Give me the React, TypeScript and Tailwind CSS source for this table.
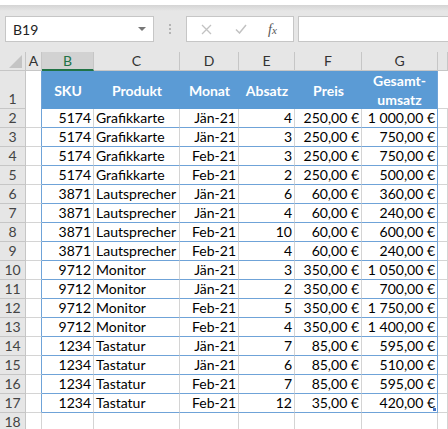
import React from "react";

const rows: [string, string, string, string, string, string][] = [
  ["5174", "Grafikkarte", "Jän-21", "4", "250,00 €", "1 000,00 €"],
  ["5174", "Grafikkarte", "Jän-21", "3", "250,00 €", "750,00 €"],
  ["5174", "Grafikkarte", "Feb-21", "3", "250,00 €", "750,00 €"],
  ["5174", "Grafikkarte", "Feb-21", "2", "250,00 €", "500,00 €"],
  ["3871", "Lautsprecher", "Jän-21", "6", "60,00 €", "360,00 €"],
  ["3871", "Lautsprecher", "Jän-21", "4", "60,00 €", "240,00 €"],
  ["3871", "Lautsprecher", "Feb-21", "10", "60,00 €", "600,00 €"],
  ["3871", "Lautsprecher", "Feb-21", "4", "60,00 €", "240,00 €"],
  ["9712", "Monitor", "Jän-21", "3", "350,00 €", "1 050,00 €"],
  ["9712", "Monitor", "Jän-21", "2", "350,00 €", "700,00 €"],
  ["9712", "Monitor", "Feb-21", "5", "350,00 €", "1 750,00 €"],
  ["9712", "Monitor", "Feb-21", "4", "350,00 €", "1 400,00 €"],
  ["1234", "Tastatur", "Jän-21", "7", "85,00 €", "595,00 €"],
  ["1234", "Tastatur", "Jän-21", "6", "85,00 €", "510,00 €"],
  ["1234", "Tastatur", "Feb-21", "7", "85,00 €", "595,00 €"],
  ["1234", "Tastatur", "Feb-21", "12", "35,00 €", "420,00 €"],
];

const grid = "grid grid-cols-[26px_16px_52px_86px_59px_56px_67px_76px_1fr]";
const letters = ["A", "B", "C", "D", "E", "F", "G", ""];
// Ausrichtung je Datenspalte (B..G)
const align = ["justify-end", "justify-start", "justify-end", "justify-end", "justify-end", "justify-end"];

function RowHead({ n, tall }: { n: string; tall?: boolean }) {
  return (
    <div
      className={`flex items-end justify-center border-r border-b border-[#c6c6c6] bg-[#e6e6e6] text-[14px] leading-[18px] text-[#444] ${
        tall ? "h-[38px]" : "h-[19px]"
      }`}
    >
      {n}
    </div>
  );
}

function FormulaBar() {
  return (
    <div className="bg-[#e6e6e6]">
      <div className="h-[5px] bg-white" />
      <div className="h-[6px] bg-gradient-to-b from-[#d4d4d4] to-[#e6e6e6]" />
      <div className="flex h-[41px] items-start pt-[5px]">
        <div className="ml-[5px] flex h-[26px] w-[149px] items-center justify-between border border-[#c6c6c6] bg-white pl-[7px] pr-[7px]">
          <span className="text-[14px] text-[#222]">B19</span>
          <span className="h-0 w-0 border-x-[4px] border-t-[4px] border-x-transparent border-t-[#777]" />
        </div>
        <div className="flex w-[32px] flex-col items-center gap-[2px] pt-[8px]">
          <span className="h-[2px] w-[2px] bg-[#b4b4b4]" />
          <span className="h-[2px] w-[2px] bg-[#b4b4b4]" />
          <span className="h-[2px] w-[2px] bg-[#b4b4b4]" />
        </div>
        <div className="flex h-[26px] w-[108px] items-center border border-[#c6c6c6] bg-white">
          <svg className="ml-[14px]" width="11" height="11" viewBox="0 0 11 11">
            <path d="M1 1L10 10M10 1L1 10" stroke="#c2c2c2" strokeWidth="1.3" />
          </svg>
          <svg className="ml-[23px]" width="12" height="10" viewBox="0 0 12 10">
            <path d="M1 5.5L4.5 9L11 1" stroke="#c2c2c2" strokeWidth="1.5" fill="none" />
          </svg>
          <span className="ml-[21px] font-['Liberation_Serif',serif] text-[14px] italic text-[#555]">
            f<span className="text-[11px]">x</span>
          </span>
        </div>
        <div className="ml-[4px] h-[26px] flex-1 border border-r-0 border-[#c6c6c6] bg-white" />
      </div>
    </div>
  );
}

export default function App() {
  const blue = "border-[#6fa3d8]";
  return (
    <div className="h-[429px] w-[448px] overflow-hidden bg-white font-['Lato','Liberation_Sans',sans-serif] text-black">
      <FormulaBar />
      <div className={grid}>
        {/* Ecke mit Dreieck */}
        <div className="flex h-[19px] items-end justify-end border-r border-b border-[#c6c6c6] bg-[#e6e6e6] pr-[3px] pb-[2px]">
          <svg width="13" height="13" viewBox="0 0 13 13">
            <path d="M13 0V13H0Z" fill="#c4c4c4" />
          </svg>
        </div>
        {letters.map((l) => (
          <div
            key={l || "h"}
            className={`flex h-[19px] items-center justify-center border-r border-b text-[14px] leading-none ${
              l === "B"
                ? "border-b-2 border-r-[#c6c6c6] border-b-[#217346] bg-[#d2d2d2] text-[#217346]"
                : "border-[#c6c6c6] bg-[#e6e6e6] text-[#333]"
            }`}
          >
            {l}
          </div>
        ))}

        {/* Zeile 1: Tabellenkopf */}
        <RowHead n="1" tall />
        <div className={`h-[38px] border-r ${blue}`} />
        {["SKU", "Produkt", "Monat", "Absatz", "Preis"].map((h) => (
          <div
            key={h}
            className="flex h-[38px] items-center justify-center bg-[#5b9bd5] text-[14px] font-bold text-white"
          >
            {h}
          </div>
        ))}
        <div className={`flex h-[38px] flex-col items-center justify-center border-r ${blue} bg-[#5b9bd5] text-[14px] font-bold leading-[19px] text-white`}>
          <span>Gesamt-</span>
          <span>umsatz</span>
        </div>
        <div className="h-[38px] border-b border-[#d4d4d4]" />

        {/* Datenzeilen */}
        {rows.map((r, i) => (
          <React.Fragment key={i}>
            <RowHead n={String(i + 2)} />
            <div className={`h-[19px] border-r border-b ${blue} border-b-[#d4d4d4]`} />
            {r.map((v, j) => (
              <div
                key={j}
                className={`relative flex h-[19px] items-end border-b ${blue} px-[2px] text-[14px] leading-[18px] ${align[j]} ${
                  j === 5 ? `border-r ${blue}` : "border-r border-r-[#d4d4d4]"
                }`}
              >
                {v}
                {i === rows.length - 1 && j === 5 && (
                  <span className="absolute right-[1px] bottom-[1px] h-[3px] w-[3px] bg-[#4472c4]" />
                )}
              </div>
            ))}
            <div className="h-[19px] border-r border-b border-[#d4d4d4]" />
          </React.Fragment>
        ))}

        {/* Zeile 18 */}
        <RowHead n="18" />
        {letters.map((l) => (
          <div key={l || "h"} className="h-[19px] border-r border-b border-[#d4d4d4]" />
        ))}
      </div>
    </div>
  );
}
